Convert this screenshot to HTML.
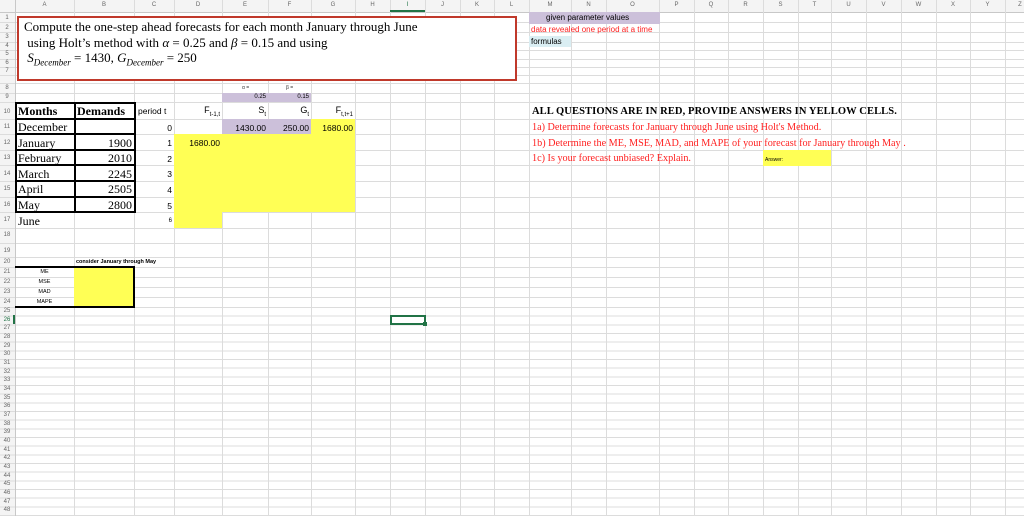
<!DOCTYPE html>
<html><head><meta charset="utf-8"><style>
*{margin:0;padding:0;box-sizing:border-box}
body{width:1024px;height:516px;overflow:hidden;background:#fff;position:relative;font-family:"Liberation Sans",sans-serif}
.a{position:absolute}
.v{position:absolute;top:0;width:1px;height:516px;background:#dcdcdc}
.h{position:absolute;left:0;width:1024px;height:1px;background:#dcdcdc}
.cl{position:absolute;top:2px;font-size:6px;color:#666;text-align:center}
.rn{position:absolute;left:0;width:14px;font-size:6px;color:#666;text-align:center}
.s{font-family:"Liberation Serif",serif;font-size:12px;color:#000}
.n{font-size:8.5px;color:#000}
.r{text-align:right}
</style></head><body>
<div class="a" style="left:0;top:0;width:1024px;height:12px;background:#f4f4f4"></div>
<div class="a" style="left:0;top:0;width:15px;height:516px;background:#f4f4f4"></div>
<div class="a" style="left:0;top:307px;width:1024px;height:209px;background:repeating-linear-gradient(to bottom,#dcdcdc 0,#dcdcdc 1px,transparent 1px,transparent 8.67px)"></div>
<div class="h" style="top:12px;background:#c8c8c8"></div>
<div class="h" style="top:22px"></div><div class="h" style="top:32px"></div><div class="h" style="top:42px"></div><div class="h" style="top:50px"></div><div class="h" style="top:59px"></div><div class="h" style="top:67px"></div><div class="h" style="top:75px"></div><div class="h" style="top:83px"></div><div class="h" style="top:93px"></div><div class="h" style="top:102px"></div><div class="h" style="top:119px"></div><div class="h" style="top:134px"></div><div class="h" style="top:150px"></div><div class="h" style="top:165px"></div><div class="h" style="top:181px"></div><div class="h" style="top:197px"></div><div class="h" style="top:212px"></div><div class="h" style="top:228px"></div><div class="h" style="top:243px"></div><div class="h" style="top:257px"></div><div class="h" style="top:267px"></div><div class="h" style="top:277px"></div><div class="h" style="top:287px"></div><div class="h" style="top:297px"></div>
<div class="v" style="left:15px;background:#c8c8c8"></div>
<div class="v" style="left:74px"></div><div class="v" style="left:134px"></div><div class="v" style="left:174px"></div><div class="v" style="left:222px"></div><div class="v" style="left:268px"></div><div class="v" style="left:311px"></div><div class="v" style="left:355px"></div><div class="v" style="left:390px"></div><div class="v" style="left:425px"></div><div class="v" style="left:460px"></div><div class="v" style="left:494px"></div><div class="v" style="left:529px"></div><div class="v" style="left:571px"></div><div class="v" style="left:606px"></div><div class="v" style="left:659px"></div><div class="v" style="left:694px"></div><div class="v" style="left:728px"></div><div class="v" style="left:763px"></div><div class="v" style="left:798px"></div><div class="v" style="left:831px"></div><div class="v" style="left:866px"></div><div class="v" style="left:901px"></div><div class="v" style="left:936px"></div><div class="v" style="left:970px"></div><div class="v" style="left:1005px"></div>
<div class="cl" style="left:15px;width:59px">A</div><div class="cl" style="left:74px;width:60px">B</div><div class="cl" style="left:134px;width:40px">C</div><div class="cl" style="left:174px;width:48px">D</div><div class="cl" style="left:222px;width:46px">E</div><div class="cl" style="left:268px;width:43px">F</div><div class="cl" style="left:311px;width:44px">G</div><div class="cl" style="left:355px;width:35px">H</div><div class="cl" style="left:390px;width:35px;color:#217346">I</div><div class="cl" style="left:425px;width:35px">J</div><div class="cl" style="left:460px;width:34px">K</div><div class="cl" style="left:494px;width:35px">L</div><div class="cl" style="left:529px;width:42px">M</div><div class="cl" style="left:571px;width:35px">N</div><div class="cl" style="left:606px;width:53px">O</div><div class="cl" style="left:659px;width:35px">P</div><div class="cl" style="left:694px;width:34px">Q</div><div class="cl" style="left:728px;width:35px">R</div><div class="cl" style="left:763px;width:35px">S</div><div class="cl" style="left:798px;width:33px">T</div><div class="cl" style="left:831px;width:35px">U</div><div class="cl" style="left:866px;width:35px">V</div><div class="cl" style="left:901px;width:35px">W</div><div class="cl" style="left:936px;width:34px">X</div><div class="cl" style="left:970px;width:35px">Y</div><div class="cl" style="left:1005px;width:30px">Z</div>
<div class="a" style="left:390px;top:10px;width:35px;height:2px;background:#217346"></div>
<div class="rn" style="top:15px">1</div><div class="rn" style="top:25px">2</div><div class="rn" style="top:34px">3</div><div class="rn" style="top:43px">4</div><div class="rn" style="top:51px">5</div><div class="rn" style="top:60px">6</div><div class="rn" style="top:68px">7</div><div class="rn" style="top:85px">8</div><div class="rn" style="top:94px">9</div><div class="rn" style="top:109px">10</div><div class="rn" style="top:124px">11</div><div class="rn" style="top:140px">12</div><div class="rn" style="top:155px">13</div><div class="rn" style="top:171px">14</div><div class="rn" style="top:186px">15</div><div class="rn" style="top:202px">16</div><div class="rn" style="top:217px">17</div><div class="rn" style="top:232px">18</div><div class="rn" style="top:248px">19</div><div class="rn" style="top:259px">20</div><div class="rn" style="top:269px">21</div><div class="rn" style="top:279px">22</div><div class="rn" style="top:289px">23</div><div class="rn" style="top:299px">24</div>
<div class="rn" style="top:308px">25</div><div class="rn" style="top:317px;color:#217346">26</div><div class="rn" style="top:325px">27</div><div class="rn" style="top:334px">28</div><div class="rn" style="top:343px">29</div><div class="rn" style="top:351px">30</div><div class="rn" style="top:360px">31</div><div class="rn" style="top:369px">32</div><div class="rn" style="top:377px">33</div><div class="rn" style="top:386px">34</div><div class="rn" style="top:395px">35</div><div class="rn" style="top:403px">36</div><div class="rn" style="top:412px">37</div><div class="rn" style="top:421px">38</div><div class="rn" style="top:429px">39</div><div class="rn" style="top:438px">40</div><div class="rn" style="top:447px">41</div><div class="rn" style="top:455px">42</div><div class="rn" style="top:464px">43</div><div class="rn" style="top:473px">44</div><div class="rn" style="top:481px">45</div><div class="rn" style="top:490px">46</div><div class="rn" style="top:499px">47</div><div class="rn" style="top:507px">48</div>
<div class="a" style="left:13px;top:315px;width:2px;height:9px;background:#217346"></div>
<div class="a" style="left:529px;top:12px;width:131px;height:12px;background:#ccc0da"></div>
<div class="a" style="left:529px;top:36px;width:42px;height:11px;background:#daeef3"></div>
<div class="a" style="left:222px;top:93px;width:89px;height:9px;background:#ccc0da"></div>
<div class="a" style="left:222px;top:119px;width:89px;height:15px;background:#ccc0da"></div>
<div class="a" style="left:311px;top:119px;width:44px;height:15px;background:#ffff55"></div>
<div class="a" style="left:174px;top:134px;width:181px;height:78px;background:#ffff55"></div>
<div class="a" style="left:174px;top:212px;width:48px;height:16px;background:#ffff55"></div>
<div class="a" style="left:74px;top:267px;width:60px;height:40px;background:#ffff55"></div>
<div class="a" style="left:763px;top:150px;width:68px;height:16px;background:#ffff55"></div>
<div class="a s" style="left:17px;top:16px;width:500px;height:65px;background:#fff;border:2px solid #c0392b;padding:1px 0 0 5px;font-size:13px;line-height:15.5px">Compute the one-step ahead forecasts for each month January through June<br>&nbsp;using Holt’s method with <i>α</i> = 0.25 and <i>β</i> = 0.15 and using<br>&nbsp;<i>S<sub style="font-size:9px">December</sub></i> = 1430, <i>G<sub style="font-size:9px">December</sub></i> = 250</div>
<div class="a" style="left:15px;top:102px;width:121px;height:111px;border:2px solid #000"></div>
<div class="a" style="left:74px;top:102px;width:2px;height:111px;background:#000"></div>
<div class="a" style="left:15px;top:118px;width:121px;height:2px;background:#000"></div>
<div class="a" style="left:15px;top:133px;width:121px;height:2px;background:#000"></div>
<div class="a" style="left:15px;top:149px;width:121px;height:2px;background:#000"></div>
<div class="a" style="left:15px;top:164px;width:121px;height:2px;background:#000"></div>
<div class="a" style="left:15px;top:180px;width:121px;height:2px;background:#000"></div>
<div class="a" style="left:15px;top:196px;width:121px;height:2px;background:#000"></div>
<div class="a" style="left:15px;top:266px;width:120px;height:2px;background:#000"></div>
<div class="a" style="left:15px;top:306px;width:120px;height:2px;background:#000"></div>
<div class="a" style="left:133px;top:266px;width:2px;height:42px;background:#000"></div>
<div class="a s" style="left:18px;top:104px;font-weight:bold">Months</div>
<div class="a s" style="left:77px;top:104px;font-weight:bold">Demands</div>
<div class="a s" style="left:18px;top:120px">December</div>
<div class="a s" style="left:18px;top:136px">January</div>
<div class="a s" style="left:18px;top:151px">February</div>
<div class="a s" style="left:18px;top:167px">March</div>
<div class="a s" style="left:18px;top:182px">April</div>
<div class="a s" style="left:18px;top:198px">May</div>
<div class="a s" style="left:18px;top:214px">June</div>
<div class="a s r" style="left:74px;width:58px;top:136px">1900</div>
<div class="a s r" style="left:74px;width:58px;top:151px">2010</div>
<div class="a s r" style="left:74px;width:58px;top:167px">2245</div>
<div class="a s r" style="left:74px;width:58px;top:182px">2505</div>
<div class="a s r" style="left:74px;width:58px;top:198px">2800</div>
<div class="a n" style="left:138px;top:106px">period t</div>
<div class="a n r" style="left:134px;width:38px;top:123px">0</div>
<div class="a n r" style="left:134px;width:38px;top:138px">1</div>
<div class="a n r" style="left:134px;width:38px;top:154px">2</div>
<div class="a n r" style="left:134px;width:38px;top:169px">3</div>
<div class="a n r" style="left:134px;width:38px;top:185px">4</div>
<div class="a n r" style="left:134px;width:38px;top:201px">5</div>
<div class="a r" style="left:134px;width:38px;top:218px;font-size:6px">6</div>
<div class="a r" style="left:174px;width:46px;top:105px;font-size:9px">F<sub style="font-size:6px">t-1,t</sub></div>
<div class="a r" style="left:222px;width:44px;top:105px;font-size:9px">S<sub style="font-size:6px">t</sub></div>
<div class="a r" style="left:268px;width:41px;top:105px;font-size:9px">G<sub style="font-size:6px">t</sub></div>
<div class="a r" style="left:311px;width:42px;top:105px;font-size:9px">F<sub style="font-size:6px">t,t+1</sub></div>
<div class="a" style="left:242px;top:85px;font-size:5px;color:#333">α =</div>
<div class="a" style="left:286px;top:85px;font-size:5px;color:#333">β =</div>
<div class="a r" style="left:222px;width:44px;top:94px;font-size:6px">0.25</div>
<div class="a r" style="left:268px;width:41px;top:94px;font-size:6px">0.15</div>
<div class="a n r" style="left:222px;width:44px;top:123px">1430.00</div>
<div class="a n r" style="left:268px;width:41px;top:123px">250.00</div>
<div class="a n r" style="left:311px;width:42px;top:123px">1680.00</div>
<div class="a n r" style="left:174px;width:46px;top:138px">1680.00</div>
<div class="a" style="left:76px;top:259px;font-size:5.5px;font-weight:bold">consider January through May</div>
<div class="a" style="left:15px;width:59px;top:269px;font-size:5.5px;text-align:center">ME</div>
<div class="a" style="left:15px;width:59px;top:279px;font-size:5.5px;text-align:center">MSE</div>
<div class="a" style="left:15px;width:59px;top:289px;font-size:5.5px;text-align:center">MAD</div>
<div class="a" style="left:15px;width:59px;top:299px;font-size:5.5px;text-align:center">MAPE</div>
<div class="a" style="left:546px;top:13px;font-size:8px">given parameter values</div>
<div class="a" style="left:531px;top:25px;font-size:8px;color:#ff2020">data revealed one period at a time</div>
<div class="a" style="left:531px;top:37px;font-size:8px">formulas</div>
<div class="a s" style="left:532px;top:106px;font-size:10.5px;font-weight:bold;letter-spacing:0.1px">ALL QUESTIONS ARE IN RED, PROVIDE ANSWERS IN YELLOW CELLS.</div>
<div class="a s" style="left:532px;top:122px;font-size:10.2px;color:#ff2020">1a) Determine forecasts for January through June using Holt's Method.</div>
<div class="a s" style="left:532px;top:138px;font-size:10.2px;color:#ff2020">1b) Determine the ME, MSE, MAD, and MAPE of your forecast for January through May .</div>
<div class="a s" style="left:532px;top:153px;font-size:10.2px;color:#ff2020">1c) Is your forecast unbiased? Explain.</div>
<div class="a" style="left:765px;top:157px;font-size:5px">Answer:</div>
<div class="a" style="left:390px;top:315px;width:36px;height:10px;border:2px solid #217346"></div>
<div class="a" style="left:423px;top:322px;width:4px;height:4px;background:#217346"></div>
</body></html>
